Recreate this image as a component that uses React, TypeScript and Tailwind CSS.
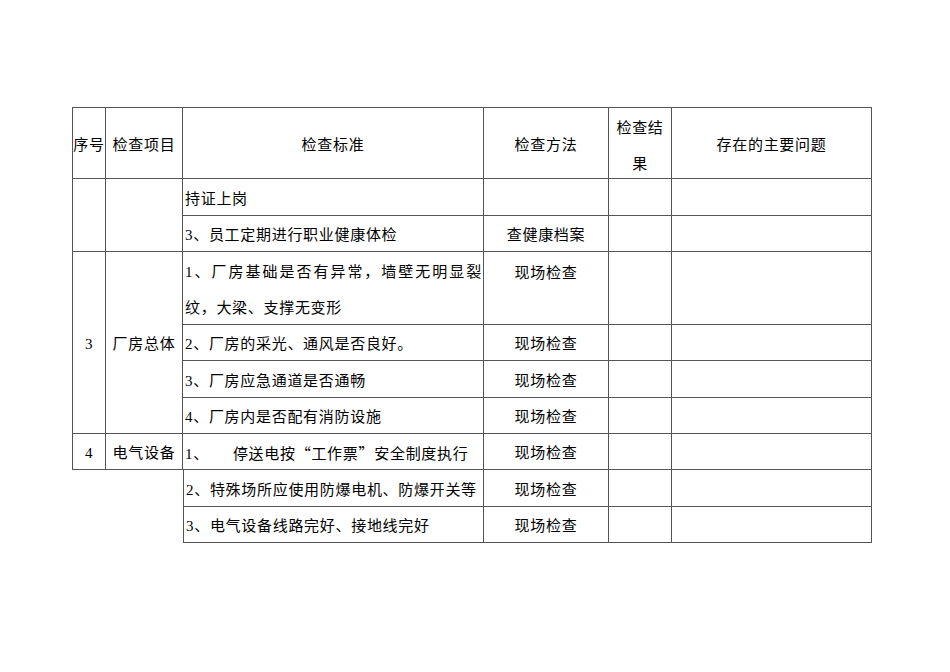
import React from "react";

// Inspection checklist page (continued table)

const line = "border-[#555]";

function Cell({
  className = "",
  children,
}: {
  className?: string;
  children?: React.ReactNode;
}) {
  return (
    <div className={`border-r border-b ${line} flex pt-[3px] text-[15px] leading-[36px] tracking-[0.7px] ${className}`}>
      {children}
    </div>
  );
}

const cjk = { fontFamily: '"Noto Sans CJK SC", sans-serif' };

const body = [
  { std: "持证上岗", method: "" },
  { std: "3、员工定期进行职业健康体检", method: "查健康档案" },
  { std: "__wrap__", method: "现场检查" },
  { std: "2、厂房的采光、通风是否良好。", method: "现场检查" },
  { std: "3、厂房应急通道是否通畅", method: "现场检查" },
  { std: "4、厂房内是否配有消防设施", method: "现场检查" },
  { std: "__gap__", method: "现场检查" },
  { std: "2、特殊场所应使用防爆电机、防爆开关等", method: "现场检查" },
  { std: "3、电气设备线路完好、接地线完好", method: "现场检查" },
];

const rowStart = [
  "row-start-2",
  "row-start-3",
  "row-start-4",
  "row-start-5",
  "row-start-6",
  "row-start-7",
  "row-start-8",
  "row-start-9",
  "row-start-10",
];

export default function App() {
  return (
    <div
      className="min-h-[672px] w-[950px] bg-white pt-[107px] pl-[72px] text-black"
      style={{ fontFamily: '"Liberation Serif", "Noto Sans CJK SC", serif' }}
    >
      <div className="grid grid-cols-[34px_77px_301px_125px_63px_200px] grid-rows-[72px_37px_36px_73px_36px_37px_36px_36px_37px_36px]">
        {/* Header */}
        <Cell className="col-start-1 row-start-1 border-l border-t items-center justify-center tracking-[0.5px]">
          序号
        </Cell>
        <Cell className="col-start-2 row-start-1 border-t items-center justify-center">
          检查项目
        </Cell>
        <Cell className="col-start-3 row-start-1 border-t items-center justify-center">
          检查标准
        </Cell>
        <Cell className="col-start-4 row-start-1 border-t items-center justify-center">
          检查方法
        </Cell>
        <Cell className="col-start-5 row-start-1 border-t items-center justify-center text-center leading-[34px]">
          <span className="pt-[2px]">
            检查结
            <br />果
          </span>
        </Cell>
        <Cell className="col-start-6 row-start-1 border-t items-center justify-center">
          存在的主要问题
        </Cell>

        {/* Left group columns */}
        <Cell className="col-start-1 row-start-2 row-span-2 border-l" />
        <Cell className="col-start-2 row-start-2 row-span-2" />
        <Cell className="col-start-1 row-start-4 row-span-4 border-l items-center justify-center">
          3
        </Cell>
        <Cell className="col-start-2 row-start-4 row-span-4 items-center justify-center">
          厂房总体
        </Cell>
        <Cell className="col-start-1 row-start-8 border-l items-center justify-center">
          4
        </Cell>
        <Cell className="col-start-2 row-start-8 items-center justify-center">
          电气设备
        </Cell>

        {/* Body rows */}
        {body.map((r, i) => {
          const loose = i >= 7 ? "border-l" : "";
          const top = i === 2;
          return (
            <React.Fragment key={i}>
              <Cell className={`col-start-3 ${rowStart[i]} ${loose} items-center pl-[2px] pr-[1px] whitespace-nowrap`}>
                {r.std === "__wrap__" ? (
                  <div className="w-full">
                    <div className="text-justify [text-align-last:justify]">
                      1、厂房基础是否有异常，墙壁无明显裂
                    </div>
                    <div>纹，大梁、支撑无变形</div>
                  </div>
                ) : r.std === "__gap__" ? (
                  <span>
                    1、<span className="inline-block w-[24px]" />停送电按<span style={cjk}>“</span>工作票<span style={cjk}>”</span>安全制度执行
                  </span>
                ) : (
                  r.std
                )}
              </Cell>
              <Cell className={`col-start-4 ${rowStart[i]} justify-center ${top ? "items-start" : "items-center"}`}>
                {r.method}
              </Cell>
              <Cell className={`col-start-5 ${rowStart[i]}`} />
              <Cell className={`col-start-6 ${rowStart[i]}`} />
            </React.Fragment>
          );
        })}
      </div>
    </div>
  );
}
